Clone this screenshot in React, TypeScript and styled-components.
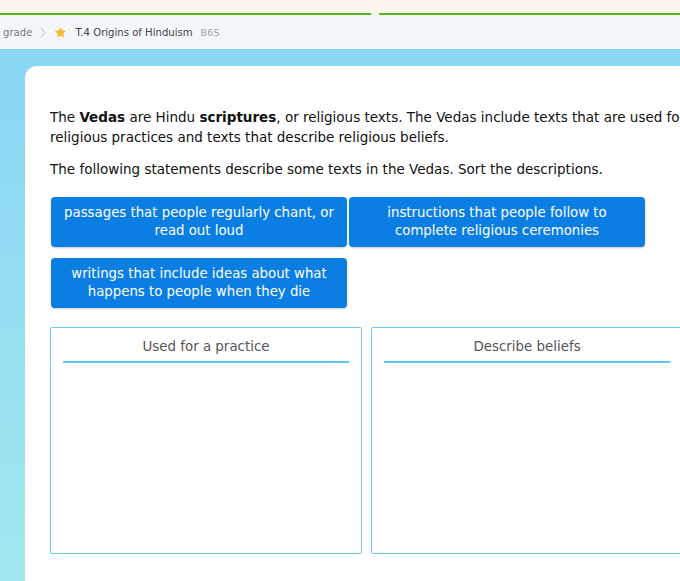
import React from "react";
import styled, { createGlobalStyle } from "styled-components";

const GlobalStyle = createGlobalStyle`
    html, body {
        margin: 0;
        padding: 0;
        height: 100%;
        overflow: hidden;
    }
    body {
        font-family: "DejaVu Sans", Verdana, sans-serif;
        background: #ffffff;
    }
    #root {
        height: 100%;
    }
`;

const Page = styled.div`
    display: flex;
    flex-direction: column;
    height: 100%;
    width: 100%;
`;

const TopStrip = styled.div`
    height: 13px;
    background: #fef6ef;
    border-bottom: 2px solid #56b41a;
    position: relative;

    &::after {
        content: "";
        position: absolute;
        left: 371px;
        bottom: -2px;
        width: 8px;
        height: 2px;
        background: #f3f7fa;
    }
`;

const Breadcrumbs = styled.nav`
    height: 34px;
    background: #f3f7fa;
    display: flex;
    align-items: center;
    padding-left: 3px;
    font-size: 10.1px;
    color: #444;
`;

const Crumb = styled.span<{ $muted?: boolean }>`
    color: ${(p) => (p.$muted ? "#777" : "#444")};
`;

const Separator = styled.span`
    margin: 0 8px 0 8px;
    display: flex;
    align-items: center;
`;

const SkillCode = styled.span`
    color: #a0a0a0;
    font-size: 9.4px;
    margin-left: 8px;
    letter-spacing: 0.2px;
`;

const Star = styled.svg`
    width: 13px;
    height: 13px;
    margin-right: 8px;
`;

const Backdrop = styled.div`
    flex: 1;
    background: linear-gradient(180deg, #89d7f5 0%, #a2e7ef 100%);
    padding: 17px 0 0 25px;
    display: flex;
`;

const Card = styled.main`
    flex: 1;
    background: #ffffff;
    border-top-left-radius: 12px;
    padding: 41px 0 0 25px;
    min-width: 0;
`;

const Prompt = styled.p`
    margin: 0 0 12px 0;
    font-size: 13.5px;
    line-height: 20px;
    color: #111;
    white-space: nowrap;
`;

const Tiles = styled.div`
    display: grid;
    grid-template-columns: 296px 296px;
    column-gap: 2px;
    row-gap: 11px;
    margin: 18px 0 19px 1px;
`;

const Tile = styled.button`
    height: 50px;
    border: none;
    border-radius: 4px;
    background: #0b7ee4;
    color: #ffffff;
    font-family: inherit;
    font-size: 13.3px;
    line-height: 18px;
    text-align: center;
    padding: 0 9px;
    box-shadow: 0 1px 2px rgba(0, 0, 0, 0.2);
`;

const Buckets = styled.div`
    display: flex;
    gap: 9px;
`;

const Bucket = styled.section`
    flex: 0 0 312px;
    height: 227px;
    box-sizing: border-box;
    border: 1px solid #6ccdf4;
    border-radius: 2px;
    padding: 0 12px;
`;

const BucketTitle = styled.h3`
    margin: 0;
    padding: 10px 0 6px;
    font-size: 13.4px;
    line-height: 17px;
    font-weight: normal;
    color: #555;
    text-align: center;
    border-bottom: 2px solid #5bc8f0;
`;

const tiles = [
    "passages that people regularly chant, or read out loud",
    "instructions that people follow to complete religious ceremonies",
    "writings that include ideas about what happens to people when they die",
];

const App: React.FC = () => {
    return (
        <Page>
            <GlobalStyle />
            <TopStrip />
            <Breadcrumbs>
                <Crumb $muted>grade</Crumb>
                <Separator>
                    <svg width="6" height="11" viewBox="0 0 6 11">
                        <path d="M1 1l4 4.5L1 10" fill="none" stroke="#bbb" strokeWidth="1" />
                    </svg>
                </Separator>
                <Star viewBox="0 0 24 24">
                    <path
                        d="M12 1.8l3.1 6.6 7.1.9-5.2 4.9 1.3 7.1L12 17.8l-6.3 3.5 1.3-7.1L1.8 9.3l7.1-.9z"
                        fill="#fbb731"
                    />
                </Star>
                <Crumb>T.4 Origins of Hinduism</Crumb>
                <SkillCode>B6S</SkillCode>
            </Breadcrumbs>
            <Backdrop>
                <Card>
                    <Prompt>
                        The <b>Vedas</b> are Hindu <b>scriptures</b>, or religious texts. The Vedas include texts that are used for
                        <br />
                        religious practices and texts that describe religious beliefs.
                    </Prompt>
                    <Prompt>The following statements describe some texts in the Vedas. Sort the descriptions.</Prompt>
                    <Tiles>
                        {tiles.map((t) => (
                            <Tile key={t}>{t}</Tile>
                        ))}
                    </Tiles>
                    <Buckets>
                        <Bucket>
                            <BucketTitle>Used for a practice</BucketTitle>
                        </Bucket>
                        <Bucket>
                            <BucketTitle>Describe beliefs</BucketTitle>
                        </Bucket>
                    </Buckets>
                </Card>
            </Backdrop>
        </Page>
    );
};

export default App;
